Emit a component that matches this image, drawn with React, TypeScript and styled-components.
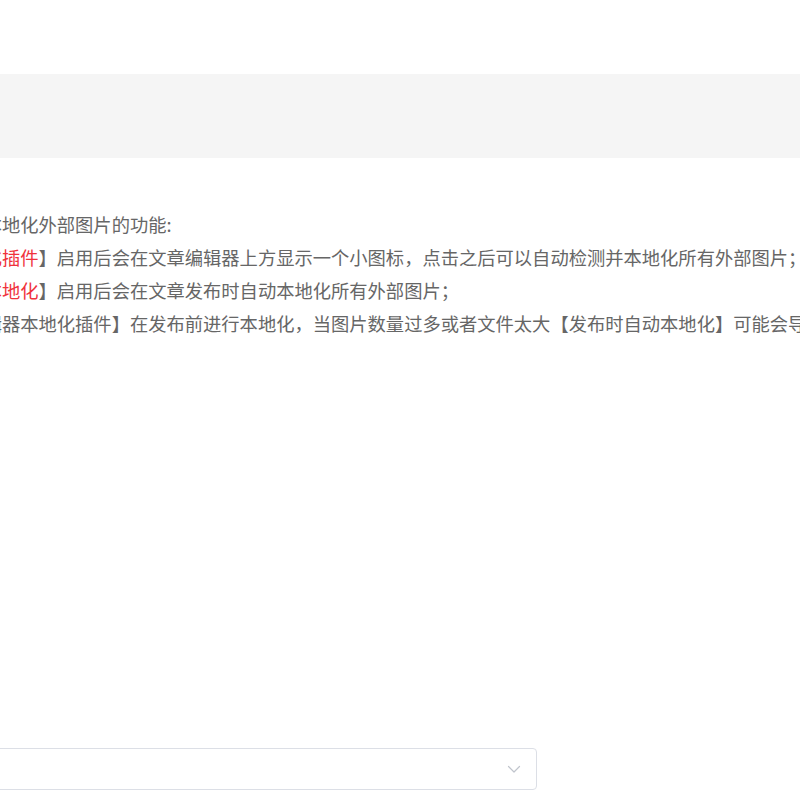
import React from "react";
import styled, { createGlobalStyle } from "styled-components";

const GlobalStyle = createGlobalStyle`
  html, body {
    margin: 0;
    padding: 0;
    background: #ffffff;
    overflow: hidden;
  }
  body {
    font-family: "Noto Sans CJK SC", "Noto Sans", sans-serif;
  }
`;

const Page = styled.div`
  width: 800px;
  height: 800px;
  overflow: hidden;
  display: flex;
  flex-direction: column;
`;

const HeaderBand = styled.div`
  margin-top: 74px;
  height: 84px;
  background: #f5f5f5;
  flex-shrink: 0;
`;

const Description = styled.div`
  margin-top: 50px;
  margin-left: -126px;
  display: flex;
  flex-direction: column;
  font-size: 18.3px;
  line-height: 33px;
  color: #666666;
  white-space: nowrap;
  flex-shrink: 0;
`;

const Line = styled.div`
  white-space: nowrap;
`;

const Highlight = styled.span`
  color: #f0323c;
`;

const SelectRow = styled.div`
  margin-top: 408px;
  margin-left: -200px;
  display: flex;
  flex-shrink: 0;
`;

const SelectBox = styled.div`
  width: 737px;
  height: 42px;
  box-sizing: border-box;
  border: 1px solid #dcdfe6;
  border-radius: 4px;
  background: #ffffff;
  display: flex;
  align-items: center;
  justify-content: flex-end;
  padding-right: 15px;
`;

const Chevron = () => (
  <svg width="14" height="14" viewBox="0 0 14 14" fill="none">
    <path d="M1.5 4.5 L7 10 L12.5 4.5" stroke="#c0c4cc" strokeWidth="1.2" strokeLinecap="round" strokeLinejoin="round" />
  </svg>
);

export default function App() {
  return (
    <>
      <GlobalStyle />
      <Page>
        <HeaderBand />
        <Description>
          <Line>目前提供两种本地化外部图片的功能:</Line>
          <Line>
            【<Highlight>编辑器本地化插件</Highlight>】启用后会在文章编辑器上方显示一个小图标，点击之后可以自动检测并本地化所有外部图片；
          </Line>
          <Line>
            【<Highlight>发布时自动本地化</Highlight>】启用后会在文章发布时自动本地化所有外部图片；
          </Line>
          <Line>
            建议使用【编辑器本地化插件】在发布前进行本地化，当图片数量过多或者文件太大【发布时自动本地化】可能会导致发布超时。
          </Line>
        </Description>
        <SelectRow>
          <SelectBox>
            <Chevron />
          </SelectBox>
        </SelectRow>
      </Page>
    </>
  );
}
